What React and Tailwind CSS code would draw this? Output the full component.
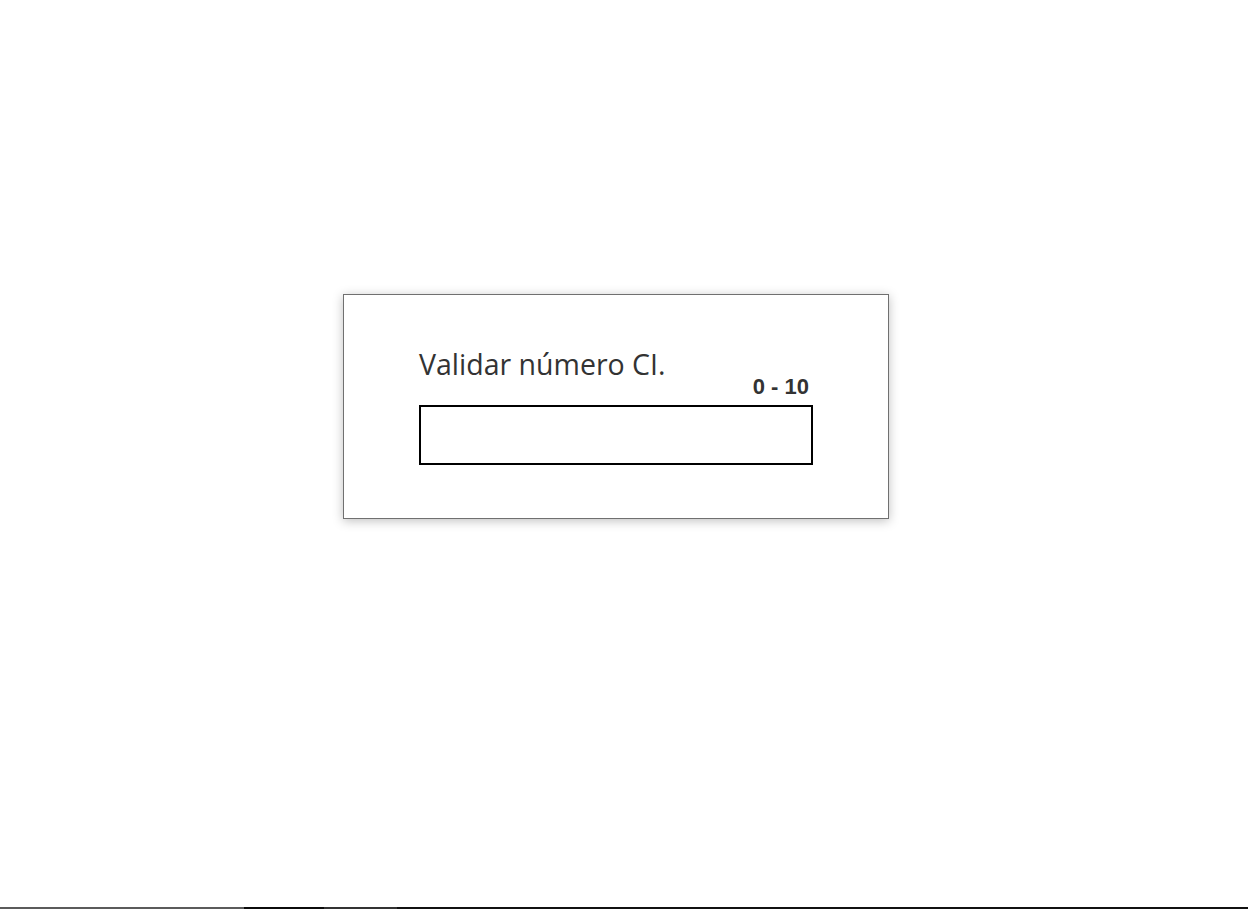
export default function App() {
  return (
    <div className="h-[909px] bg-white flex flex-col overflow-hidden">
      <div className="flex-1 pt-[294px] pl-[343px]">
        <div className="w-[546px] h-[225px] border border-[#707070] bg-white shadow-[0_2px_10px_rgba(0,0,0,0.25)] pt-[51px] pl-[75px]">
          <h1 className="text-[28.5px] leading-[36px] text-[#333] font-['Open_Sans']">
            Validar número CI.
          </h1>
          <div className="w-[394px] flex justify-end pr-[4px] -mt-[8px]">
            <span className="text-[22px] leading-[26px] font-bold text-[#333] font-['Liberation_Sans']">
              0 - 10
            </span>
          </div>
          <input
            type="text"
            className="block w-[394px] h-[60px] border-2 border-black outline-none mt-[5px] px-2"
          />
        </div>
      </div>
      <div className="h-[2px] flex">
        <div className="w-[244px] bg-[#5b5b5b]" />
        <div className="w-[80px] bg-[#0b0b0b]" />
        <div className="w-[73px] bg-[#333]" />
        <div className="flex-1 bg-[#111]" />
      </div>
    </div>
  )
}
